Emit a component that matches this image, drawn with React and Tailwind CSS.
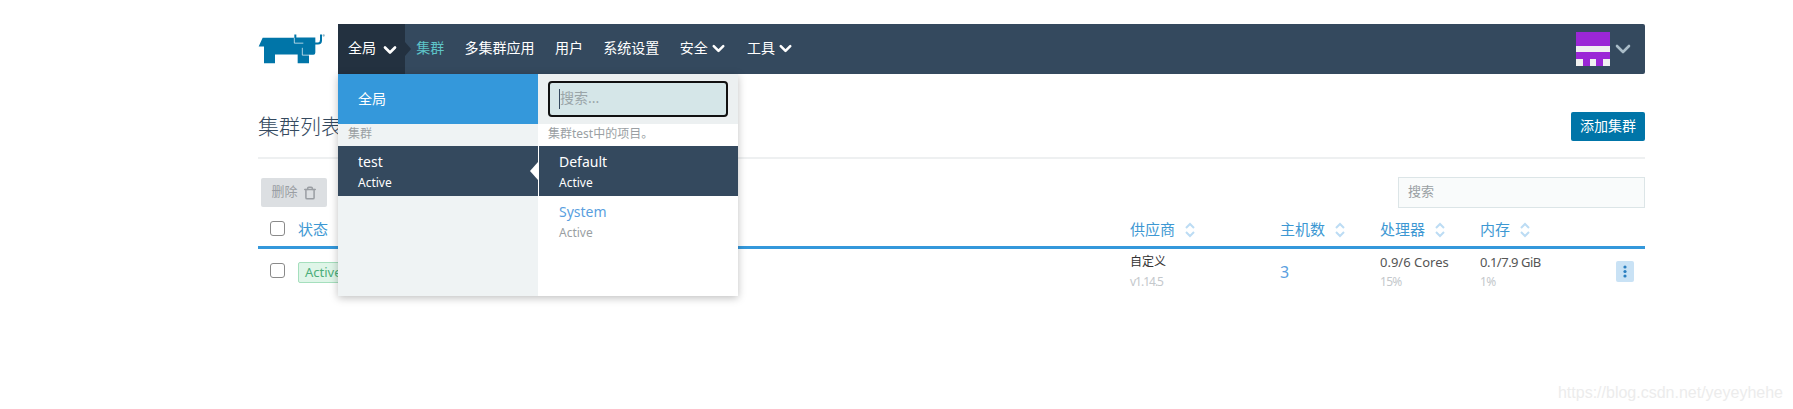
import React from 'react';
import { ChevronDown, Trash } from 'lucide-react';

const Logo = () => (
  <svg width="68" height="32" viewBox="24 40 204 95" className="mt-[9px] shrink-0">
    <path d="M26 80 L38 54 H133 V44 H139 V53 H196 V68 H204 Q210 68 210 60 V44 H216 V62 Q216 74 204 74 H196 V98 Q196 105 190 105 H177 V130 H143 V104 H75 V130 H42 V80 Z" fill="#0075a8" />
    <path d="M133 54 V70 H160 M157 84 V106 H178" fill="none" stroke="#fff" strokeWidth="2" />
    <circle cx="221" cy="47" r="3.5" fill="#8fb8cc" />
  </svg>
);

const Avatar = () => (
  <svg width="34" height="34" viewBox="0 0 5 5" shapeRendering="crispEdges">
    <rect width="5" height="5" fill="#9b27d6" />
    <rect y="2" width="5" height="1" fill="#f0f0f0" />
    <rect y="4" width="1" height="1" fill="#f0f0f0" />
    <rect x="2" y="4" width="1" height="1" fill="#f0f0f0" />
    <rect x="4" y="4" width="1" height="1" fill="#f0f0f0" />
  </svg>
);

const SortIcon = () => (
  <svg width="12" height="16" viewBox="0 0 12 16" fill="none" stroke="#bcdcf4" strokeWidth="2" className="ml-[9px]">
    <path d="M2 6 L6 2 L10 6 M2 10 L6 14 L10 10" />
  </svg>
);

const Checkbox = () => (
  <div className="w-[15px] h-[15px] rounded-[3px] border border-[#8a8a8a] bg-white" />
);

const NavLink = ({ label, active, caret }) => (
  <div className={`flex items-center px-[10.2px] pb-[4px] text-[14px] ${active ? 'text-[#5ec5c9]' : 'text-white'}`}>
    {label}
    {caret && <ChevronDown size={19} strokeWidth={3.2} className="ml-[1px] mt-[2px] mr-[-1px]" />}
  </div>
);

const Header = ({ label, sort = true }) => (
  <div className="flex items-center text-[15px] text-[#3d98d3]">
    {label}
    {sort && <SortIcon />}
  </div>
);

const Dropdown = () => (
  <div className="absolute left-[338px] top-[74px] w-[400px] h-[222px] flex bg-white shadow-[0_2px_8px_rgba(0,0,0,0.25)]">
    <div className="w-[200px] bg-[#eff3f4] flex flex-col">
      <div className="h-[50px] bg-[#3498db] text-white text-[14px] flex items-center pl-[20px] pb-[2px]">全局</div>
      <div className="h-[22px] pl-[10px] text-[12px] leading-[20px] text-[#9a9fa3]">集群</div>
      <div className="relative h-[50px] bg-[#34495e] text-white pl-[20px] pt-[5px]">
        <div className="text-[14px] leading-[22px]">test</div>
        <div className="text-[12px] leading-[20px]">Active</div>
        <div className="absolute right-0 top-[16px] w-0 h-0 border-y-[9px] border-y-transparent border-r-[8px] border-r-white" />
      </div>
    </div>
    <div className="flex-1 flex flex-col">
      <div className="h-[50px] bg-[#ecf0f1] pl-[10px] pr-[10px] flex items-center">
        <div className="w-[180px] h-[36px] rounded-[4px] border-[2px] border-[#111] bg-[#d5e6e8] flex items-center pl-[9px] pb-[3px] text-[14px] text-[#9aa5a8]">
          <div className="w-px h-[20px] mt-[3px] bg-[#34495e]" />
          搜索...
        </div>
      </div>
      <div className="h-[22px] pl-[10px] text-[12px] leading-[20px] text-[#9a9fa3]">集群test中的项目。</div>
      <div className="h-[50px] ml-[1px] bg-[#34495e] text-white pl-[20px] pt-[5px]">
        <div className="text-[14px] leading-[22px]">Default</div>
        <div className="text-[12px] leading-[20px]">Active</div>
      </div>
      <div className="h-[50px] ml-[1px] pl-[20px] pt-[5px]">
        <div className="text-[14px] leading-[22px] text-[#5a9fe0]">System</div>
        <div className="text-[12px] leading-[20px] text-[#9a9fa3]">Active</div>
      </div>
    </div>
  </div>
);

export default function App() {
  return (
    <div className="relative h-[409px] overflow-hidden bg-white pl-[258px] pr-[148px] pt-[24px] font-['Noto_Sans','Noto_Sans_CJK_SC',sans-serif]">
      <div className="flex gap-[12px] h-[50px]">
        <Logo />
        <nav className="flex-1 flex items-stretch bg-[#34495e] rounded-[2px]">
          <div className="relative w-[67px] bg-[#233140] text-white text-[14px] flex items-center pl-[10px] pb-[4px]">
            全局
            <ChevronDown size={20} strokeWidth={3.2} className="ml-[4px] mt-[5px]" />
            <div className="absolute right-[-6px] top-[18px] w-0 h-0 border-y-[7px] border-y-transparent border-l-[6px] border-l-[#233140]" />
          </div>
          <div className="w-[1px]" />
          <div className="flex items-stretch">
            <NavLink label="集群" active />
            <NavLink label="多集群应用" />
            <NavLink label="用户" />
            <NavLink label="系统设置" />
            <NavLink label="安全" caret />
            <NavLink label="工具" caret />
          </div>
          <div className="ml-auto flex items-center pr-[10px]">
            <Avatar />
            <ChevronDown size={24} strokeWidth={2.6} className="ml-[1px] text-[#a9bcc8]" />
          </div>
        </nav>
      </div>

      <div className="flex items-center justify-between mt-[38px] h-[29px]">
        <h1 className="text-[21px] font-light text-[#34495e]">集群列表</h1>
        <button className="h-[29px] w-[74px] pb-[2px] bg-[#0075a8] text-white text-[14px] rounded-[2px]">添加集群</button>
      </div>
      <div className="h-[2px] bg-[#eef0f1] mt-[16px]" />

      <div className="flex items-center justify-between mt-[18px] pl-[3px] h-[31px]">
        <button className="w-[66px] h-[29px] pb-[2px] rounded-[2px] bg-[#dcdfe2] text-[#9a9ea3] text-[13px] flex items-center justify-center gap-[5px]">
          删除
          <Trash size={14} strokeWidth={2.6} className="mt-[2px]" />
        </button>
        <div className="w-[247px] h-[31px] border border-[#dce5e7] bg-[#f9fbfb] pl-[9px] text-[13px] leading-[27px] text-[#9aa0a3]">搜索</div>
      </div>

      <div className="grid grid-cols-[40px_832px_150px_100px_100px_1fr] items-center h-[33px] mt-[5px]">
        <div className="pl-[12px] pb-[2px]"><Checkbox /></div>
        <Header label="状态" sort={false} />
        <Header label="供应商" />
        <Header label="主机数" />
        <Header label="处理器" />
        <Header label="内存" />
      </div>
      <div className="h-[3px] bg-[#3498db]" />
      <div className="grid grid-cols-[40px_832px_150px_100px_100px_1fr] h-[50px] items-start">
        <div className="pl-[12px] pt-[14px]"><Checkbox /></div>
        <div className="pt-[13px]"><span className="block h-[21px] w-[60px] rounded-[2px] border border-[#a5dfbd] bg-[#dff5e8] pl-[6px] text-[13px] leading-[19px] text-[#4cae7a]">Active</span></div>
        <div className="pt-[3px] leading-[20px]">
          <div className="text-[12px] text-[#333]">自定义</div>
          <div className="text-[12px] tracking-[-1px] text-[#c4c8cc]">v1.14.5</div>
        </div>
        <div className="pt-[11px] text-[16px] leading-[24px] text-[#5a9fe0]">3</div>
        <div className="pt-[3px] leading-[20px]">
          <div className="text-[13px] text-[#555]">0.9/6 Cores</div>
          <div className="text-[12px] tracking-[-0.7px] text-[#c4c8cc]">15%</div>
        </div>
        <div className="flex items-start">
          <div className="w-[136px] pt-[3px] leading-[20px]">
            <div className="text-[13px] tracking-[-0.5px] text-[#555]">0.1/7.9 GiB</div>
            <div className="text-[12px] tracking-[-0.7px] text-[#c4c8cc]">1%</div>
          </div>
          <div className="w-[18px] h-[21px] mt-[12px] rounded-[2px] bg-[#c9e2f5] flex items-center justify-center">
            <svg width="4" height="13" viewBox="0 0 4 13" fill="#2a7fc0">
              <circle cx="2" cy="2" r="1.6" />
              <circle cx="2" cy="6.5" r="1.6" />
              <circle cx="2" cy="11" r="1.6" />
            </svg>
          </div>
        </div>
      </div>

      <Dropdown />
      <div className="absolute right-[10px] top-[381px] font-['Liberation_Sans',sans-serif] text-[16px] text-[#ececec]">https://blog.csdn.net/yeyeyhehe</div>
    </div>
  );
}
